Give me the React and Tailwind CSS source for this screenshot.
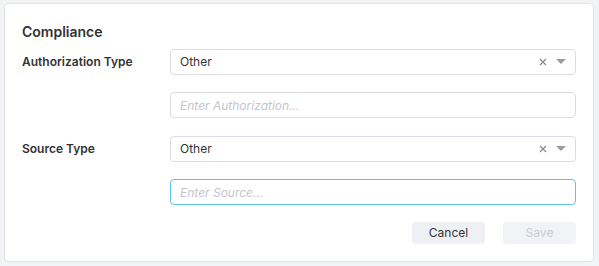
import React, { useState } from 'react';

const Caret = () => (
    <svg width="10" height="6" viewBox="0 0 10 6" className="text-[#9a9ca3]">
        <path d="M0 0 L10 0 L5 5 Z" fill="currentColor" />
    </svg>
);

const Clear = () => (
    <svg width="8" height="8" viewBox="0 0 8 8" className="text-[#8a8c93]">
        <path d="M1 1 L7 7 M7 1 L1 7" stroke="currentColor" strokeWidth="1.3" fill="none" />
    </svg>
);

const SelectBox = ({ value }) => (
    <div className="flex-1 h-[26px] flex items-center justify-between pl-[9px] pr-[9px] border border-[#dcdce4] rounded-[4px] bg-white">
        <span className="text-[12px] text-[#333]">{value}</span>
        <div className="flex items-center gap-[9px]">
            <button className="flex items-center"><Clear /></button>
            <Caret />
        </div>
    </div>
);

const Row = ({ label, children, className = '' }) => (
    <div className={`flex items-center ${className}`}>
        <div className="w-[148px] text-[12px] font-semibold text-[#333]">{label}</div>
        {children}
    </div>
);

const App = () => {
    const [auth, setAuth] = useState('');
    const [source, setSource] = useState('');

    return (
        <div className="w-[599px] h-[266px] bg-[#f2f3f5] pt-[3px] pl-[4px] font-['Inter',sans-serif]">
            <div className="w-[590px] h-[259px] bg-white border border-[#e2e3e8] rounded-[4px] pt-[18px] px-[17px]">
                <h2 className="text-[14px] leading-[20px] font-semibold text-[#333] mb-[7px]">Compliance</h2>

                <div className="flex flex-col gap-[17px]">
                    <Row label="Authorization Type">
                        <SelectBox value="Other" />
                    </Row>
                    <Row label="">
                        <input
                            value={auth}
                            onChange={(e) => setAuth(e.target.value)}
                            placeholder="Enter Authorization..."
                            className="flex-1 h-[26px] px-[9px] text-[12px] border border-[#dcdce4] rounded-[4px] outline-none placeholder:italic placeholder:text-[#c3c6d0]"
                        />
                    </Row>
                    <Row label="Source Type" className="mt-[1px]">
                        <SelectBox value="Other" />
                    </Row>
                    <Row label="">
                        <input
                            value={source}
                            onChange={(e) => setSource(e.target.value)}
                            placeholder="Enter Source..."
                            className="flex-1 h-[26px] px-[9px] text-[12px] border border-[#5bc4e6] rounded-[4px] outline-none placeholder:italic placeholder:text-[#c3c6d0]"
                        />
                    </Row>
                    <div className="flex justify-end gap-[18px]">
                        <button className="w-[73px] h-[22px] rounded-[4px] bg-[#eff0f4] text-[12px] text-[#333]">Cancel</button>
                        <button disabled className="w-[73px] h-[22px] rounded-[4px] bg-[#f2f3f6] text-[12px] text-[#c9ccd4]">Save</button>
                    </div>
                </div>
            </div>
        </div>
    );
};

export default App;
